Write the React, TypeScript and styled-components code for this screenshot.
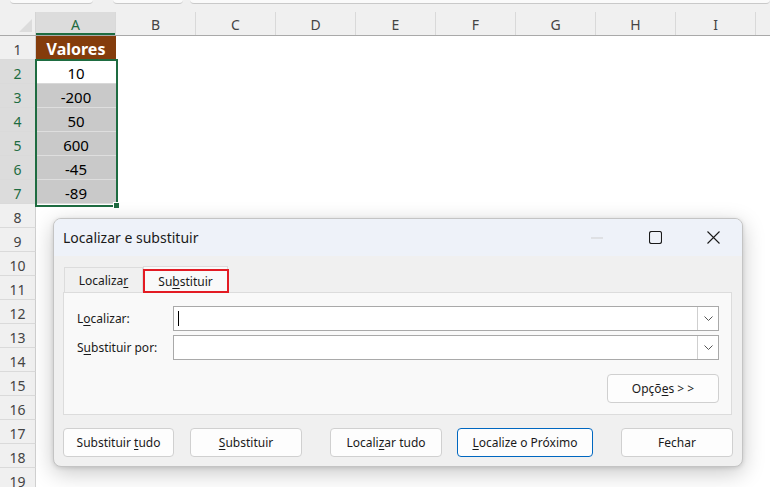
import React from 'react';
import styled, { createGlobalStyle, css } from 'styled-components';

const GREEN = '#1e6c41';
const UI_FONT = '"Noto Sans", "Liberation Sans", sans-serif';

const Global = createGlobalStyle`
  html, body { margin: 0; padding: 0; background: #fff; }
  body { width: 770px; height: 487px; overflow: hidden; font-family: ${UI_FONT}; }
  * { box-sizing: border-box; }
`;

const Page = styled.div`
  position: relative;
  width: 770px;
  height: 487px;
  overflow: hidden;
  background: #fff;
`;

/* ---------- top strip (formula bar remnants) ---------- */
const TopStrip = styled.div`
  height: 12px;
  background: #f0f0f0;
  display: flex;
  padding-left: 10px;
`;

const BarStub = styled.div<{ $w?: number; $ml?: number }>`
  height: 4px;
  width: ${p => (p.$w ? `${p.$w}px` : 'auto')};
  flex: ${p => (p.$w ? '0 0 auto' : '1')};
  margin-left: ${p => p.$ml ?? 0}px;
  background: #fafafa;
  border-bottom: 1px solid #c9c9c9;
  border-radius: 0 0 4px 4px;
`;

/* ---------- sheet ---------- */
const Sheet = styled.div`
  display: flex;
  flex-direction: column;
  font-family: ${UI_FONT};
`;

const HeaderRow = styled.div`
  display: flex;
  height: 24px;
  background: #f0f0f0;
  border-bottom: 1px solid #a9a9a9;
`;

const Corner = styled.div`
  position: relative;
  width: 36px;
  flex: 0 0 36px;
  border-right: 1px solid #d4d4d4;
  &::after {
    content: '';
    position: absolute;
    right: 3px;
    bottom: 3px;
    border-style: solid;
    border-width: 0 0 13px 13px;
    border-color: transparent transparent #dcdcdc transparent;
  }
`;

const ColHeader = styled.div<{ $selected?: boolean; $w?: number }>`
  width: ${p => p.$w ?? 80}px;
  flex: 0 0 ${p => p.$w ?? 80}px;
  display: flex;
  align-items: center;
  justify-content: center;
  padding-top: 2px;
  font-size: 14px;
  color: #444;
  border-right: 1px solid #d9d9d9;
  ${p =>
    p.$selected &&
    css`
      background: #dcdcdc;
      color: ${GREEN};
      box-shadow: inset 0 -2px 0 ${GREEN};
    `}
`;

const Row = styled.div`
  display: flex;
  height: 24px;
`;

const RowHeader = styled.div<{ $selected?: boolean }>`
  width: 36px;
  flex: 0 0 36px;
  display: flex;
  align-items: center;
  justify-content: center;
  padding-top: 4px;
  font-size: 14px;
  color: #444;
  background: #f0f0f0;
  border-right: 1px solid #d0d0d0;
  border-bottom: 1px solid #dadada;
  ${p =>
    p.$selected &&
    css`
      background: #dcdcdc;
      color: ${GREEN};
    `}
`;

const Cell = styled.div<{ $kind?: 'header' | 'active' | 'filled' | 'empty' }>`
  width: 80px;
  flex: 0 0 80px;
  display: flex;
  align-items: center;
  justify-content: center;
  padding-top: 3px;
  font-size: 15px;
  color: #000;
  ${p =>
    p.$kind === 'header' &&
    css`
      background: #843c0c;
      color: #fff;
      font-weight: 700;
      font-size: 16px;
      padding-top: 1px;
    `}
  ${p =>
    p.$kind === 'active' &&
    css`
      background: #fff;
      border-bottom: 1px solid #d8d8d8;
    `}
  ${p =>
    p.$kind === 'filled' &&
    css`
      background: #c9c9c9;
      border-bottom: 1px solid #dedede;
    `}
`;

const Selection = styled.div`
  position: absolute;
  left: 35px;
  top: 59px;
  width: 83px;
  height: 148px;
  border: 2px solid ${GREEN};
  pointer-events: none;
`;

const FillHandle = styled.div`
  position: absolute;
  left: 113px;
  top: 202px;
  width: 7px;
  height: 7px;
  background: ${GREEN};
  border: 1px solid #fff;
`;

/* ---------- dialog ---------- */
const Dialog = styled.div`
  position: absolute;
  left: 53px;
  top: 218px;
  width: 690px;
  height: 249px;
  border: 1px solid #c4c4c4;
  border-radius: 8px;
  background: #f0f0f0;
  box-shadow: 0 6px 22px rgba(0, 0, 0, 0.22), 0 1px 4px rgba(0, 0, 0, 0.12);
  overflow: hidden;
  display: flex;
  flex-direction: column;
  font-family: ${UI_FONT};
  color: #1a1a1a;
`;

const TitleBar = styled.div`
  height: 37px;
  flex: 0 0 37px;
  background: #eef2f9;
  display: flex;
  align-items: center;
  padding-left: 9px;
`;

const Title = styled.div`
  flex: 1;
  font-size: 14px;
  color: #1a1a1a;
`;

const WinButton = styled.div`
  width: 58px;
  height: 37px;
  display: flex;
  align-items: center;
  justify-content: center;
`;

const Body = styled.div`
  flex: 1;
  display: flex;
  flex-direction: column;
  padding: 9px 9px 10px 9px;
`;

const Tabs = styled.div`
  display: flex;
  align-items: flex-end;
  height: 27px;
  padding-left: 1px;
`;

const Tab = styled.div<{ $active?: boolean; $w: number }>`
  position: relative;
  width: ${p => p.$w}px;
  height: ${p => (p.$active ? 27 : 25)}px;
  display: flex;
  align-items: center;
  justify-content: center;
  font-size: 12px;
  color: #1a1a1a;
  border: 1px solid #dcdcdc;
  border-bottom: none;
  background: ${p => (p.$active ? '#f9f9f9' : '#f0f0f0')};
  margin-bottom: ${p => (p.$active ? '-1px' : '0')};
  z-index: ${p => (p.$active ? 1 : 0)};
  padding-top: ${p => (p.$active ? '3px' : '0')};
`;

const RedMark = styled.div`
  position: absolute;
  left: -1px;
  right: -2px;
  top: 2px;
  bottom: 0;
  border: 2px solid #e31b23;
`;

const Panel = styled.div`
  height: 123px;
  margin-right: 1px;
  background: #f9f9f9;
  border: 1px solid #dcdcdc;
  padding: 13px 12px 12px 13px;
  display: flex;
  flex-direction: column;
`;

const FieldRow = styled.div`
  display: flex;
  align-items: center;
  margin-bottom: 4px;
`;

const Label = styled.div`
  width: 96px;
  flex: 0 0 96px;
  font-size: 12px;
  color: #1a1a1a;
`;

const Combo = styled.div`
  flex: 1;
  height: 25px;
  background: #fff;
  border: 1px solid #a9a9a9;
  display: flex;
  align-items: center;
  position: relative;
`;

const Caret = styled.div`
  position: absolute;
  left: 4px;
  top: 4px;
  width: 1px;
  height: 15px;
  background: #000;
`;

const DropButton = styled.div`
  margin-left: auto;
  width: 21px;
  height: 23px;
  border-left: 1px solid #cfcfcf;
  background: #fff;
  display: flex;
  align-items: center;
  justify-content: center;
`;

const OptionsRow = styled.div`
  display: flex;
  justify-content: flex-end;
  margin-top: 10px;
`;

const Button = styled.div<{ $w: number; $primary?: boolean }>`
  width: ${p => p.$w}px;
  height: 29px;
  display: flex;
  align-items: center;
  justify-content: center;
  font-size: 12px;
  color: #1a1a1a;
  background: #fdfdfd;
  border: 1px solid ${p => (p.$primary ? '#0067c0' : '#d0d0d0')};
  border-radius: 4px;
  white-space: pre;
`;

const ButtonText = styled.span`
  white-space: pre;
`;

const ButtonBar = styled.div`
  display: flex;
  gap: 28px;
  margin-top: 13px;
`;

const ButtonGroup = styled.div<{ $gap: number }>`
  display: flex;
  gap: ${p => p.$gap}px;
`;

const U = styled.span`
  text-decoration: underline;
  text-underline-offset: 2px;
`;

const Chevron = () => (
  <svg width="9" height="5" viewBox="0 0 9 5">
    <path d="M0.5 0.5 L4.5 4.5 L8.5 0.5" fill="none" stroke="#555" strokeWidth="1" />
  </svg>
);

const columns = ['A', 'B', 'C', 'D', 'E', 'F', 'G', 'H', 'I'];
const values: Record<number, string> = { 2: '10', 3: '-200', 4: '50', 5: '600', 6: '-45', 7: '-89' };

export default function App() {
  const rows = Array.from({ length: 19 }, (_, i) => i + 1);
  return (
    <Page>
      <Global />
      <TopStrip>
        <BarStub $w={83} />
        <BarStub $w={70} $ml={20} />
        <BarStub $ml={7} />
      </TopStrip>
      <Sheet>
        <HeaderRow>
          <Corner />
          {columns.map(c => (
            <ColHeader key={c} $selected={c === 'A'}>
              {c}
            </ColHeader>
          ))}
          <ColHeader $w={20} />
        </HeaderRow>
        {rows.map(r => (
          <Row key={r}>
            <RowHeader $selected={r >= 2 && r <= 7}>{r}</RowHeader>
            {r === 1 ? (
              <Cell $kind="header">Valores</Cell>
            ) : r === 2 ? (
              <Cell $kind="active">{values[r]}</Cell>
            ) : r <= 7 ? (
              <Cell $kind="filled">{values[r]}</Cell>
            ) : (
              <Cell $kind="empty" />
            )}
          </Row>
        ))}
      </Sheet>
      <Selection />
      <FillHandle />

      <Dialog>
        <TitleBar>
          <Title>Localizar e substituir</Title>
          <WinButton>
            <svg width="12" height="2" viewBox="0 0 12 2">
              <path d="M0 1 H12" stroke="#cfcfcf" strokeWidth="1" />
            </svg>
          </WinButton>
          <WinButton>
            <svg width="13" height="13" viewBox="0 0 13 13">
              <rect x="0.5" y="0.5" width="12" height="12" rx="2" fill="none" stroke="#1a1a1a" strokeWidth="1.1" />
            </svg>
          </WinButton>
          <WinButton>
            <svg width="13" height="13" viewBox="0 0 13 13">
              <path d="M0.5 0.5 L12.5 12.5 M12.5 0.5 L0.5 12.5" stroke="#1a1a1a" strokeWidth="1.1" />
            </svg>
          </WinButton>
        </TitleBar>
        <Body>
          <Tabs>
            <Tab $w={79}>
              <ButtonText>
                Localiza<U>r</U>
              </ButtonText>
            </Tab>
            <Tab $w={85} $active>
              <ButtonText>
                Su<U>b</U>stituir
              </ButtonText>
              <RedMark />
            </Tab>
          </Tabs>
          <Panel>
            <FieldRow>
              <Label>
                L<U>o</U>calizar:
              </Label>
              <Combo>
                <Caret />
                <DropButton>
                  <Chevron />
                </DropButton>
              </Combo>
            </FieldRow>
            <FieldRow>
              <Label>
                S<U>u</U>bstituir por:
              </Label>
              <Combo>
                <DropButton>
                  <Chevron />
                </DropButton>
              </Combo>
            </FieldRow>
            <OptionsRow>
              <Button $w={112}>
                <ButtonText>
                  Opçõ<U>e</U>s {'>'} {'>'}
                </ButtonText>
              </Button>
            </OptionsRow>
          </Panel>
          <ButtonBar>
            <ButtonGroup $gap={16}>
              <Button $w={111}>
                <ButtonText>
                  Substituir <U>t</U>udo
                </ButtonText>
              </Button>
              <Button $w={112}>
                <ButtonText>
                  <U>S</U>ubstituir
                </ButtonText>
              </Button>
            </ButtonGroup>
            <ButtonGroup $gap={15}>
              <Button $w={112}>
                <ButtonText>
                  Locali<U>z</U>ar tudo
                </ButtonText>
              </Button>
              <Button $w={136} $primary>
                <ButtonText>
                  <U>L</U>ocalize o Próximo
                </ButtonText>
              </Button>
            </ButtonGroup>
            <Button $w={112}>
              <ButtonText>Fechar</ButtonText>
            </Button>
          </ButtonBar>
        </Body>
      </Dialog>
    </Page>
  );
}
